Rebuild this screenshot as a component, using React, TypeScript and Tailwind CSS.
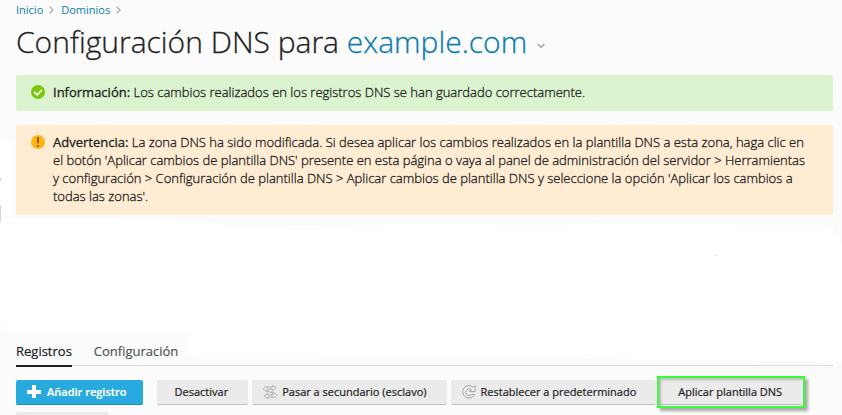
import type { ReactNode } from "react";

function Crumb({ children }: { children: ReactNode }) {
  return (
    <li className="flex items-center gap-[6px]">
      <a href="#" className="text-[#0a7cb0]">{children}</a>
      <svg width="5" height="8" viewBox="0 0 5 8" fill="none" stroke="#aaaaaa" strokeWidth="1.3" aria-hidden="true">
        <path d="M0.7 0.7 4 4 0.7 7.3" />
      </svg>
    </li>
  );
}

function Alert({ title, tone, icon, children }: { title: string; tone: string; icon: ReactNode; children: ReactNode }) {
  return (
    <div role="status" className={`flex gap-2 rounded-xs pt-2 pr-5 pb-[10px] pl-[15px] text-[13px] leading-[18px] font-light text-[#222222] [-webkit-text-stroke:0.3px] ${tone}`}>
      <span className="mt-[2px] shrink-0">{icon}</span>
      <p>
        <b className="font-medium">{title}</b> {children}
      </p>
    </div>
  );
}

function ToolButton({ icon, children }: { icon?: ReactNode; children: ReactNode }) {
  return (
    <button
      type="button"
      className={`flex h-[25px] items-center gap-[5px] rounded-xs border-b border-[#c0c0c0] bg-[#ebebeb] pr-5 text-[11px] font-medium whitespace-nowrap text-[#222222] [-webkit-text-stroke:0.2px] ${icon ? "pl-[11px]" : "pl-[18px]"}`}
    >
      {icon}
      {children}
    </button>
  );
}

const okIcon = (
  <svg width="14" height="14" viewBox="0 0 14 14" aria-hidden="true">
    <circle cx="7" cy="7" r="7" fill="#7ac70c" />
    <path d="M3.2 6.8 6.2 9.8 10.8 5" fill="none" stroke="#ffffff" strokeWidth="1.7" />
  </svg>
);

const warnIcon = (
  <svg width="14" height="14" viewBox="0 0 14 14" aria-hidden="true">
    <circle cx="7" cy="7" r="7" fill="#ffb50f" />
    <path d="M6 2.2h2L7.7 8.6H6.3zM6.1 9.9h1.8v1.8H6.1z" fill="#8a4a0c" />
  </svg>
);

const swapIcon = (
  <svg width="14" height="14" viewBox="0 0 14 14" fill="#f3f3f3" stroke="#a2a2a2" strokeWidth="0.9" strokeLinejoin="round" aria-hidden="true">
    <path d="M9.2 0.5 13 3 9.2 5.5V4H4.2C3.4 4 3.4 4.6 4 5.1L6.4 6.8H3.8L1.4 5.1C-0.2 3.7 0.8 2 2.8 2H9.2z" />
    <path d="M4.8 13.5 1 11 4.8 8.5V10H9.8C10.6 10 10.6 9.4 10 8.9L7.6 7.2H10.2L12.6 8.9C14.2 10.3 13.2 12 11.2 12H4.8z" />
  </svg>
);

const resetIcon = (
  <svg width="14" height="14" viewBox="0 0 14 14" fill="#f3f3f3" stroke="#a2a2a2" strokeWidth="1" strokeLinejoin="round" aria-hidden="true">
    <path d="M13.1 0.7V6.4H7.4L9.4 4.4A3.5 3.5 0 1 0 10 9.3H12.6A6.2 6.2 0 1 1 11.3 2.5z" />
  </svg>
);

export default function App() {
  return (
    <div className="relative isolate h-screen overflow-hidden bg-[#fbfbfb] font-['Open_Sans','Noto_Sans',sans-serif] text-[#222222]">
      {/* Blank brushed area behind the page content */}
      <svg className="absolute top-0 left-0 -z-10" width="842" height="415" viewBox="0 0 842 415" aria-hidden="true">
        <path
          fill="#ffffff"
          d="M0 142Q3 138 8 139Q15 143 14 155L11 185 10 218 40 218 110 219 205 222 235 227 300 226 420 224 560 225 600 223 720 223 735 225 830 225Q834 227 834 233Q842 236 842 244V362L725 360 660 360 580 358 530 355 450 355 360 356 325 359 200 359Q187 357 186 346Q186 336 192 332H14Q4 331 0 323Z"
        />
        <path fill="#fff0d8" d="M712 254h4l2 1v1h-3z" />
        <path fill="#d8d8d8" d="M0 178h1v3H0zM0 205h1v17H0z" />
      </svg>

      <div className="pr-[9px] pl-4">
        <nav>
          <ol className="flex gap-[7px] pt-px text-[11px] leading-[18px]">
            <Crumb>Inicio</Crumb>
            <Crumb>Dominios</Crumb>
          </ol>
        </nav>

        <h1 className="mt-[3px] flex items-center text-[30px] leading-[40px] font-light whitespace-nowrap [-webkit-text-stroke:0.3px]">
          <span>
            Configuración DNS para <a href="#" className="text-[#0a7cb0]">example.com</a>
          </span>
          <svg className="mt-2 ml-[10px]" width="8" height="6" viewBox="0 0 8 6" fill="none" stroke="#999999" strokeWidth="1.2" aria-hidden="true">
            <path d="M0.7 1 4 4.3 7.3 1" />
          </svg>
        </h1>

        <div className="mt-[13px] flex flex-col gap-[14px]">
          <Alert title="Información:" tone="bg-[#dbf4cf]" icon={okIcon}>
            Los cambios realizados en los registros DNS se han guardado correctamente.
          </Alert>
          <Alert title="Advertencia:" tone="bg-[#ffecd3]" icon={warnIcon}>
            La zona DNS ha sido modificada. Si desea aplicar los cambios realizados en la plantilla DNS a esta zona, haga clic
            en el botón 'Aplicar cambios de plantilla DNS' presente en esta página o vaya al panel de administración del
            servidor &gt; Herramientas y configuración &gt; Configuración de plantilla DNS &gt; Aplicar cambios de plantilla
            DNS y seleccione la opción 'Aplicar los cambios a todas las zonas'.
          </Alert>
        </div>

        <div className="mt-[127px] flex h-6 gap-[22px] border-b border-[#dddddd] text-[13px] leading-[18px] font-medium [-webkit-text-stroke:0.2px]">
          <a href="#" className="-mb-px h-[25px] border-b-2 border-[#222222]">Registros</a>
          <a href="#" className="text-[#555555]">Configuración</a>
        </div>

        <div className="mt-[14px] flex gap-1">
          <button
            type="button"
            className="mr-[10px] flex h-[25px] items-center gap-[6px] rounded-xs border-b border-[#1c8ab8] bg-[#28aade] pr-4 pl-[11px] text-[11px] font-semibold whitespace-nowrap text-white [-webkit-text-stroke:0.2px]"
          >
            <svg width="14" height="14" viewBox="0 0 14 14" fill="#ffffff" aria-hidden="true">
              <path d="M5 0h4v5h5v4H9v4H5V9H0V5h5z" />
            </svg>
            Añadir registro
          </button>
          <ToolButton>Desactivar</ToolButton>
          <ToolButton icon={swapIcon}>Pasar a secundario (esclavo)</ToolButton>
          <ToolButton icon={resetIcon}>Restablecer a predeterminado</ToolButton>
          <div className="relative">
            <ToolButton>Aplicar plantilla DNS</ToolButton>
            <div className="pointer-events-none absolute -inset-x-[3px] -top-1 -bottom-[3px] border-2 border-[#33ff33] shadow-[3px_3px_3px_#00000055,inset_2px_2px_2px_#00000040]" />
          </div>
        </div>
        <div className="mt-[7px] h-[25px] w-[92px] rounded-xs bg-[#ebebeb]" />
      </div>
    </div>
  );
}
